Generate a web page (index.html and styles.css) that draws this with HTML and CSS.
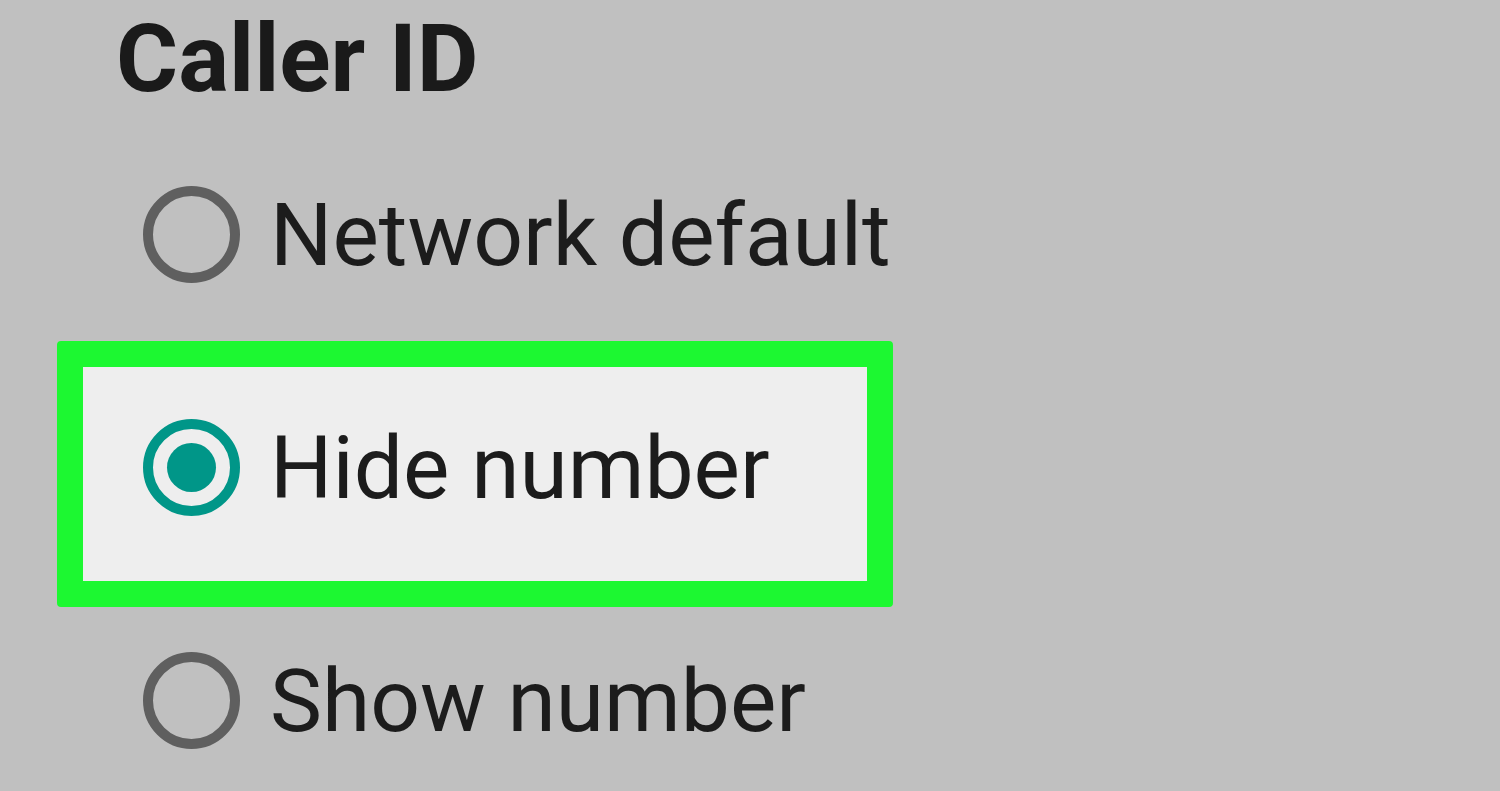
FILE: index.html
```html
<!DOCTYPE html>
<html lang="en">
<head>
    <meta charset="UTF-8">
    <meta name="viewport" content="width=device-width, initial-scale=1.0">
    <title>Caller ID</title>
    <link rel="stylesheet" href="styles.css">
</head>
<body>
    <div class="dialog">
        <h1 class="title">Caller ID</h1>
        <div class="options">
            <div class="option">
                <span class="radio"></span>
                <span class="label">Network default</span>
            </div>
            <div class="option selected">
                <span class="radio checked"></span>
                <span class="label">Hide number</span>
            </div>
            <div class="option">
                <span class="radio"></span>
                <span class="label">Show number</span>
            </div>
        </div>
    </div>
</body>
</html>
```
FILE: styles.css
```css
html, body {
    margin: 0;
    height: 100%;
    overflow: hidden;
}
body {
    background-color: #c0c0c0;
    font-family: Roboto, "Noto Sans", sans-serif;
    color: #1c1c1c;
}
.title {
    margin: 0;
    padding-left: 116px;
    font-size: 95px;
    line-height: 118px;
    font-weight: 700;
    color: #1a1a1a;
}
.options {
    display: flex;
    flex-direction: column;
    margin-left: 57px;
}
.option {
    display: flex;
    align-items: center;
    height: 233px;
    padding-left: 86px;
    box-sizing: border-box;
}
.option.selected {
    width: 836px;
    height: 266px;
    margin: -10px 0 -23px;
    padding-left: 60px;
    padding-bottom: 13px;
    border: 26px solid #1cf831;
    border-radius: 4px;
    background-color: #eeeeee;
}
.radio {
    width: 97px;
    height: 97px;
    box-sizing: border-box;
    border: 10px solid #5f5f5f;
    border-radius: 50%;
    display: flex;
    align-items: center;
    justify-content: center;
    flex-shrink: 0;
}
.radio.checked {
    border-color: #009688;
}
.radio.checked::after {
    content: "";
    width: 49px;
    height: 49px;
    border-radius: 50%;
    background-color: #009688;
}
.label {
    margin-left: 30px;
    font-size: 87.5px;
    white-space: nowrap;
}
```
